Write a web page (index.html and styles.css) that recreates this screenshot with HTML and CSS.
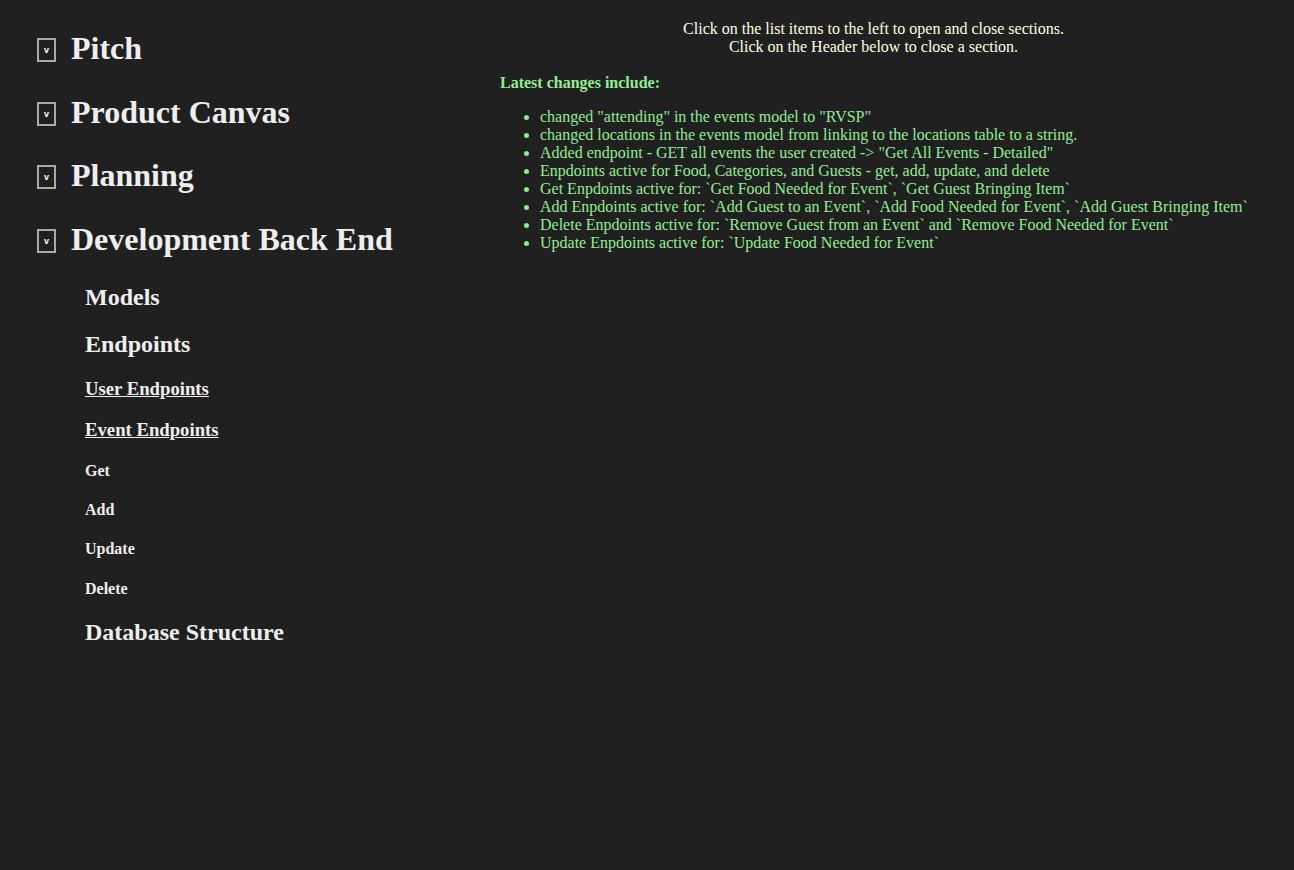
FILE: index.html
```html
<!DOCTYPE html>
<html>
<head>
<meta charset="utf-8">
<title>Docs</title>
<link rel="stylesheet" href="styles.css">
</head>
<body>
<div class="page">
  <nav class="nav">
    <div class="sec"><span class="tog">v</span><h1>Pitch</h1></div>
    <div class="sec"><span class="tog">v</span><h1>Product Canvas</h1></div>
    <div class="sec"><span class="tog">v</span><h1>Planning</h1></div>
    <div class="sec"><span class="tog">v</span><h1>Development Back End</h1></div>
    <div class="sub">
      <h2>Models</h2>
      <h2>Endpoints</h2>
      <h3 class="link">User Endpoints</h3>
      <h3 class="link">Event Endpoints</h3>
      <h4>Get</h4>
      <h4>Add</h4>
      <h4>Update</h4>
      <h4>Delete</h4>
      <h2>Database Structure</h2>
    </div>
  </nav>
  <main class="content">
    <p class="intro">Click on the list items to the left to open and close sections.<br>Click on the Header below to close a section.</p>
    <p class="latest">Latest changes include:</p>
    <ul class="changes">
      <li>changed "attending" in the events model to "RVSP"</li>
      <li>changed locations in the events model from linking to the locations table to a string.</li>
      <li>Added endpoint - GET all events the user created -&gt; "Get All Events - Detailed"</li>
      <li>Enpdoints active for Food, Categories, and Guests - get, add, update, and delete</li>
      <li>Get Enpdoints active for: `Get Food Needed for Event`, `Get Guest Bringing Item`</li>
      <li>Add Enpdoints active for: `Add Guest to an Event`, `Add Food Needed for Event`, `Add Guest Bringing Item`</li>
      <li>Delete Enpdoints active for: `Remove Guest from an Event` and `Remove Food Needed for Event`</li>
      <li>Update Enpdoints active for: `Update Food Needed for Event`</li>
    </ul>
  </main>
</div>
</body>
</html>
```
FILE: styles.css
```css
html, body {
  margin: 0;
  padding: 0;
  background: #202020;
}
body {
  font-family: "Liberation Serif", "Times New Roman", serif;
  font-size: 16px;
  color: #eeeeee;
}
.page {
  display: flex;
  align-items: flex-start;
}
.nav {
  width: 463px;
  flex: none;
  padding: 3.5px 0 0 37px;
}
.sec {
  display: flex;
  align-items: flex-start;
  gap: 15px;
  margin: 26.5px 0;
}
.sec h1 {
  margin: 0;
  font-size: 32px;
  font-weight: bold;
  color: #eeeeee;
}
.tog {
  box-sizing: border-box;
  width: 19px;
  height: 24px;
  margin-top: 8px;
  border: 2px solid #a9a9a9;
  display: flex;
  align-items: center;
  justify-content: center;
  font-family: "Liberation Sans", Arial, sans-serif;
  font-size: 9px;
  font-weight: bold;
  color: #ffffff;
}
.sub {
  padding-left: 48px;
}
.sub h2 {
  font-size: 24px;
  margin: 19.92px 0;
}
.sub h3 {
  font-size: 18.72px;
  margin: 18.72px 0;
}
.sub h4 {
  font-size: 16px;
  margin: 21.28px 0;
}
.link {
  text-decoration: underline;
}
.content {
  flex: 1;
  min-width: 0;
  padding-top: 19.5px;
}
.intro {
  width: 747px;
  margin: 0;
  text-align: center;
  color: #ffffe0;
}
.latest {
  margin: 18.6px 0 16px;
  font-weight: bold;
  color: #90ee90;
}
.changes {
  margin: 16px 0;
  padding-left: 40px;
  color: #90ee90;
}
.changes li {
  white-space: nowrap;
}
```
